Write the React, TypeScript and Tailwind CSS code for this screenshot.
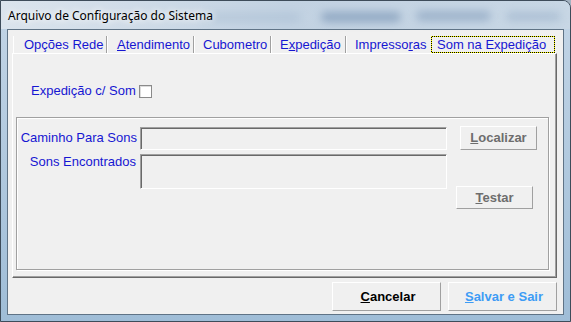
const label = "font-['Liberation_Sans',Arial,sans-serif] text-[13px] leading-[16px] text-[#1616d2]";

function Sep() {
  return <span className="w-[2px] h-[17px] border-l border-l-[#a0a0a0] border-r border-r-white" />;
}

function Btn({
  children,
  className,
}: {
  children: React.ReactNode;
  className: string;
}) {
  return (
    <div
      className={`flex items-center justify-center bg-[#f0f0f0] border border-t-white border-l-white border-r-[#a0a0a0] border-b-[#a0a0a0] font-['Liberation_Sans',Arial,sans-serif] text-[13px] font-bold ${className}`}
    >
      {children}
    </div>
  );
}

export default function App() {
  return (
    <div className="w-[571px] h-[322px] bg-[#a4b3c2] overflow-hidden">
      <div className="w-[571px] h-[322px] flex flex-col rounded-tr-[8px] border border-[#3e4c5a] bg-gradient-to-b from-[#c3d5e6] to-[#9fbdd7] overflow-hidden">
        {/* title bar */}
        <div className="relative h-[28px] flex items-center pl-[7px] bg-gradient-to-r from-[#dbe4ed] via-[#c2d2e2] to-[#c8d7e5]">
          <span className="absolute left-[320px] top-[11px] w-[80px] h-[10px] rounded-full bg-[#6f8cae] blur-[4px] opacity-60" />
          <span className="absolute left-[415px] top-[10px] w-[75px] h-[10px] rounded-full bg-[#7591b2] blur-[4px] opacity-50" />
          <span className="absolute left-[505px] top-[11px] w-[55px] h-[9px] rounded-full bg-[#93abc5] blur-[4px] opacity-50" />
          <span className="absolute left-[200px] top-[12px] w-[100px] h-[9px] rounded-full bg-[#9fb5cc] blur-[4px] opacity-40" />
          <span className="relative font-['Noto_Sans',sans-serif] text-[12px] text-black [text-shadow:0_0_6px_#fff,0_0_10px_#fff] pt-[1px]">
            Arquivo de Configuração do Sistema
          </span>
        </div>

        {/* client */}
        <div className="px-[6px]">
          <div className="w-[557px] h-[286px] border border-[#5f7386] bg-[#f0f0f0] flex flex-col">
            {/* tabs */}
            <div className={`mt-[6px] ml-[5px] h-[17px] flex ${label}`}>
              <span className="w-[93px] pl-[10px] border-l border-l-white leading-[17px]">Opções Rede</span>
              <Sep />
              <span className="w-[85px] pl-[9px] leading-[17px]"><u>A</u>tendimento</span>
              <Sep />
              <span className="w-[75px] pl-[8px] leading-[17px]">Cubometro</span>
              <Sep />
              <span className="w-[73px] pl-[8px] leading-[17px]">E<u>x</u>pedição</span>
              <Sep />
              <span className="w-[84px] pl-[8px] leading-[17px]">Impresso<u>r</u>as</span>
              <span className="w-[124px] h-[17px] p-[1px] bg-[repeating-conic-gradient(#000_0_25%,#ffff00_0_50%)] bg-[length:2px_2px]">
                <span className="block h-full pl-[5px] leading-[15px] bg-[#f0f0f0]">Som na Expedição</span>
              </span>
            </div>

            {/* page */}
            <div className="ml-[4px] w-[545px] h-[225px] border border-t-white border-l-white border-r-[#696969] border-b-[#696969] shadow-[inset_-1px_-1px_0_#a0a0a0] flex flex-col">
              <div className="mt-[29px] ml-[18px] h-[16px] flex items-center gap-[3px]">
                <span className={label}>Expedição c/ Som</span>
                <span className="w-[13px] h-[13px] border border-[#8a8a8a] bg-white shadow-[inset_1px_1px_0_#dcdcdc]" />
              </div>

              <div className="mt-[18px] ml-[3px] w-[533px] h-[153px] border border-[#a0a0a0] shadow-[inset_1px_1px_0_#fff,1px_1px_0_#fff] flex flex-col">
                <div className="mt-[8px] flex items-center">
                  <span className={`w-[120px] text-right whitespace-nowrap ${label}`}>Caminho Para Sons</span>
                  <div className="ml-[3px] w-[307px] h-[23px] border border-t-[#a0a0a0] border-l-[#a0a0a0] border-r-white border-b-white shadow-[inset_1px_1px_0_#696969]" />
                  <Btn className="ml-[13px] w-[77px] h-[24px] text-[#6d6d6d]">
                    <span><u>L</u>ocalizar</span>
                  </Btn>
                </div>
                <div className="mt-[4px] flex items-start">
                  <span className={`w-[119px] text-right whitespace-nowrap ${label}`}>Sons Encontrados</span>
                  <div className="ml-[4px] w-[307px] h-[35px] border border-t-[#a0a0a0] border-l-[#a0a0a0] border-r-white border-b-white shadow-[inset_1px_1px_0_#696969]" />
                  <Btn className="ml-[9px] mt-[32px] w-[77px] h-[23px] text-[#6d6d6d]">
                    <span><u>T</u>estar</span>
                  </Btn>
                </div>
              </div>
            </div>

            {/* bottom buttons */}
            <div className="mt-[4px] pr-[6px] flex justify-end gap-[7px]">
              <Btn className="w-[109px] h-[29px] text-black pl-[3px]">
                <span><u>C</u>ancelar</span>
              </Btn>
              <Btn className="w-[109px] h-[29px] text-[#3d9cf5] pl-[3px]">
                <span><u>S</u>alvar e Sair</span>
              </Btn>
            </div>
          </div>
        </div>
      </div>
    </div>
  );
}
